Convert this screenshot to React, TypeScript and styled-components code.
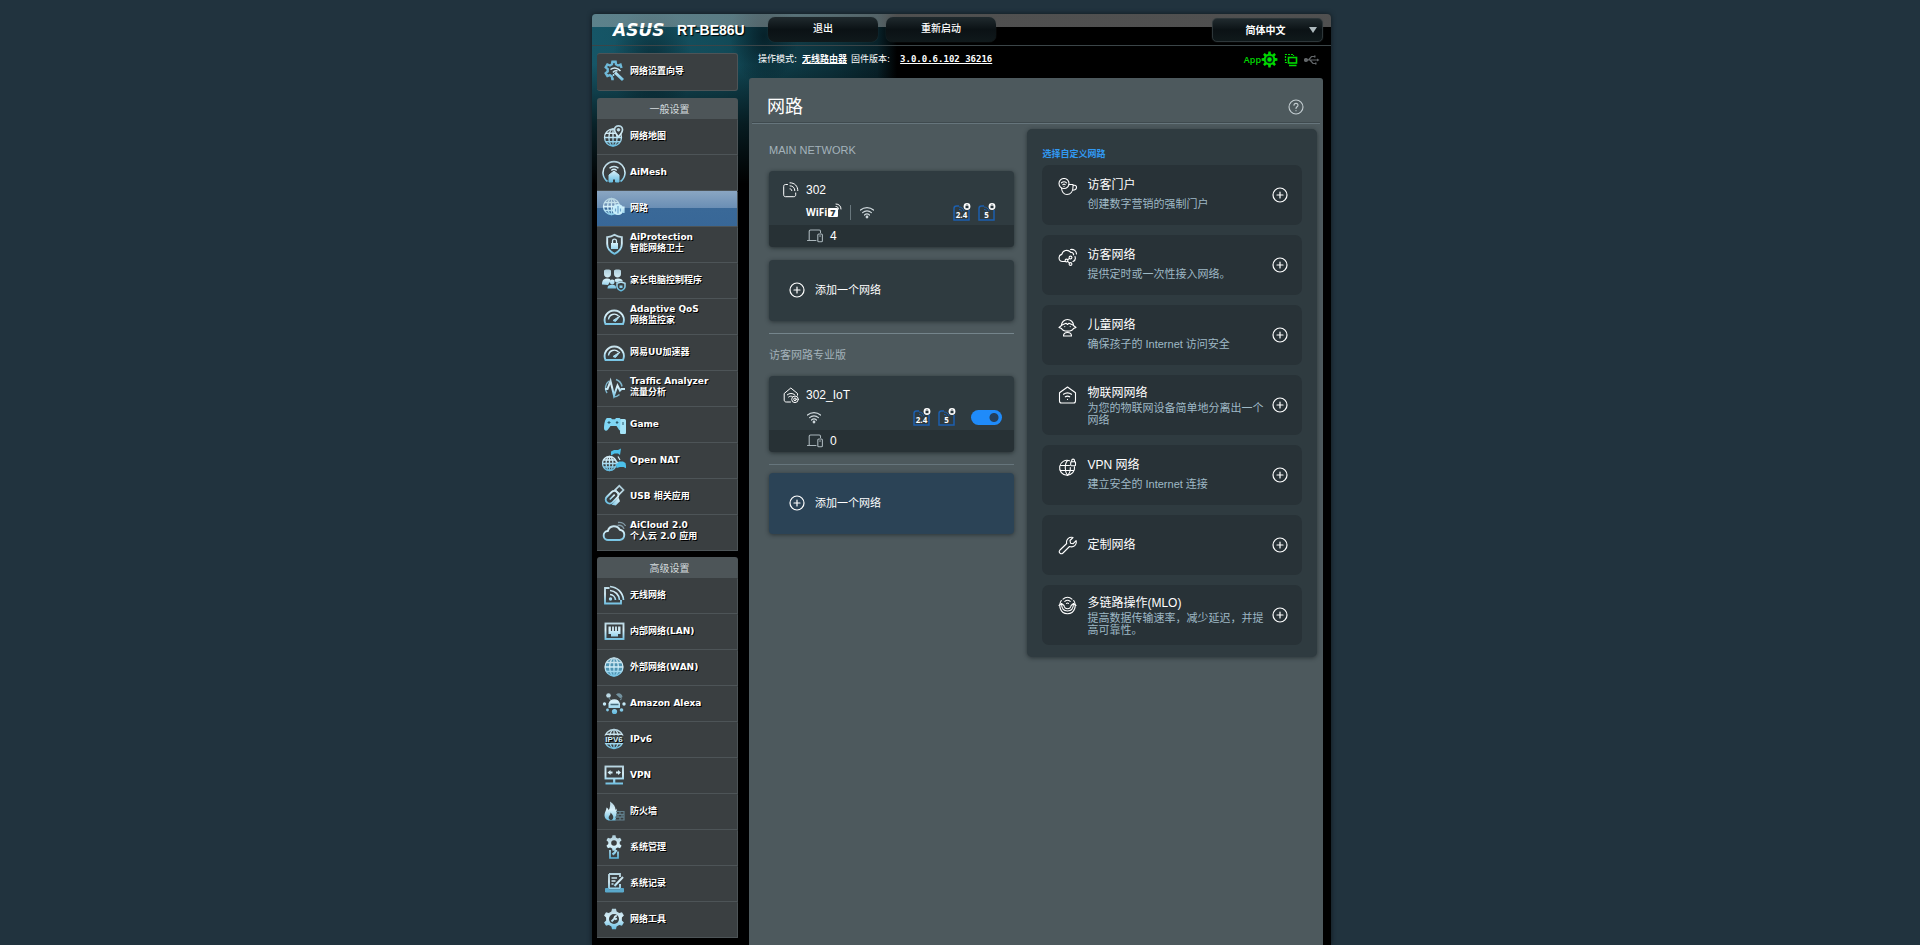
import React from "react";
import styled, { createGlobalStyle, css } from "styled-components";

const ui = `"DejaVu Sans", "Noto Sans CJK SC", sans-serif`;
const sans = `"Liberation Sans", "Noto Sans CJK SC", sans-serif`;

const GlobalStyle = createGlobalStyle`
  * { box-sizing: border-box; }
  body { margin: 0; background: #21333e; font-family: ${sans}; color: #fff; }
  button, select, input { font: inherit; color: inherit; margin: 0; }
  h1, h2, h3, p, ul { margin: 0; padding: 0; font-weight: 400; }
  ul { list-style: none; }
  svg { display: block; flex: none; }
`;

/* ---------- frame ---------- */

const Page = styled.div`
  display: flex;
  flex-direction: column;
  min-height: 100vh;
  padding: 14px 0 0 3px;
`;

const Frame = styled.div`
  flex: 1;
  width: 100%;
  max-width: 739px;
  margin: 0 auto;
  border-radius: 4px 4px 0 0;
  box-shadow: 0 0 5px #10181d;
  background:
    radial-gradient(ellipse 40px 60px at 60px 50px, rgba(0, 12, 18, 0.5), transparent),
    radial-gradient(ellipse 34px 50px at 172px 22px, rgba(0, 12, 18, 0.6), transparent),
    linear-gradient(180deg, transparent 50px, rgba(0, 0, 0, 0.6) 110px, #000 170px),
    linear-gradient(90deg, #165667 0, #124b59 130px, #0c313b 240px, #08222a 285px, #000 305px);
`;

const TopBar = styled.header`
  display: flex;
  align-items: center;
  height: 32px;
  padding: 0 8px 0 20px;
  border-bottom: 1px solid #3b4548;
  border-radius: 4px 4px 0 0;
  background: linear-gradient(180deg, rgba(190, 190, 190, 0.42) 0 13px, transparent 13px);
`;

const Model = styled.div`
  flex: 0 0 100px;
  padding-left: 9px;
  font-size: 14px;
  font-weight: 700;
  line-height: 16px;
  white-space: nowrap;
  text-shadow: 1px 1px 1px #000;
`;

const keyStyle = css`
  border: 0;
  border-radius: 7px;
  background: linear-gradient(180deg, #202a2e 0, #0b1215 50%, #10191b 100%);
  box-shadow: 0 0 1px #3c484c;
  font: 10px/24px ${sans};
  font-weight: 700;
  text-align: center;
  cursor: pointer;
`;

const TopButton = styled.button`
  ${keyStyle}
  flex: 0 0 110px;
  height: 25px;
  padding: 0 0 2px;
  margin-right: 8px;
  font-weight: 500;
`;

const Language = styled.div`
  position: relative;
  margin-left: auto;
  select {
    ${keyStyle}
    appearance: none;
    width: 111px;
    height: 24px;
    padding: 0 4px 0 0;
    text-align-last: center;
    border: 1px solid #2d3639;
    border-radius: 5px;
  }
  &::after {
    content: "";
    position: absolute;
    right: 6px;
    top: 9px;
    border: 4px solid transparent;
    border-top: 6px solid #aeb9bd;
    border-bottom: 0;
    pointer-events: none;
  }
`;

const Body = styled.div`
  display: grid;
  grid-template-columns: 141px minmax(0, 1fr);
  column-gap: 11px;
  padding: 0 8px 0 5px;
  min-height: calc(100vh - 46px);
`;

/* ---------- side menu ---------- */

const Side = styled.nav`
  display: flex;
  flex-direction: column;
  gap: 6px;
  padding-top: 7px;
`;

const Group = styled.section`
  border-radius: 3px 3px 0 0;
  overflow: hidden;
`;

const GroupTitle = styled.h2`
  height: 21px;
  padding: 3px 0 0 4px;
  background: #4d5558;
  color: #d3dadd;
  font: 10px/18px ${ui};
  text-align: center;
`;

const Item = styled.a<{ $active?: boolean; $alone?: boolean }>`
  display: flex;
  align-items: center;
  gap: 4px;
  height: ${(p) => (p.$alone ? 38 : 36)}px;
  padding: 0 0 3px 5px;
  border: 1px solid #4d5457;
  border-top-color: ${(p) => (p.$alone ? "#4d5457" : "transparent")};
  border-width: 1px 1px 1px 0;
  border-radius: ${(p) => (p.$alone ? 3 : 0)}px;
  margin-bottom: ${(p) => (p.$alone ? 1 : 0)}px;
  background: ${(p) =>
    p.$active
      ? "linear-gradient(180deg, #8aa6c2 0, #6b8fb5 46%, #3a6998 48%, #386797 100%) border-box"
      : "#3a3f41"};
  color: #fff;
  font: 700 9px/11px ${ui};
  text-decoration: none;
  text-shadow: 1px 1px 0 #000;
  white-space: nowrap;
`;

const ItemText = styled.span<{ $double?: boolean }>`
  padding: ${(p) => (p.$double ? "0 0 2px" : "2px 0 0")};
  small {
    display: block;
    font-size: 9px;
    font-weight: 600;
  }
`;

/* ---------- content ---------- */

const Status = styled.div`
  display: flex;
  align-items: center;
  height: 32px;
  padding: 0 3px 6px 9px;
  font: 9px/12px ${ui};
  a {
    color: #fff;
    font-weight: 700;
    margin: 0 4px 0 5px;
  }
`;

const Version = styled.a`
  && {
    margin-left: 10px;
    font-family: "DejaVu Sans Mono", monospace;
  }
`;

const Tray = styled.div`
  display: flex;
  align-items: center;
  gap: 6px;
  margin-left: auto;
  padding-top: 1px;
  color: #00d800;
  font-family: "Open Sans", sans-serif;
  font-weight: 600;
`;

const AppBadge = styled.span`
  display: flex;
  align-items: center;
`;

const Panel = styled.div`
  min-height: calc(100vh - 78px);
  border-radius: 3px 3px 0 0;
  background: #4d595d;
`;

const PanelHead = styled.div`
  display: flex;
  align-items: center;
  justify-content: space-between;
  height: 46px;
  margin: 0 3px;
  padding: 12px 16px 0 15px;
  border-bottom: 1px solid #66757c;
  box-shadow: inset 0 -1px 0 #3f4a4e;
  h1 {
    font: 18px/24px ${sans};
  }
`;

const IconButton = styled.button`
  display: block;
  padding: 0;
  border: 0;
  background: none;
  color: inherit;
  cursor: pointer;
`;

const Columns = styled.div`
  display: grid;
  grid-template-columns: minmax(0, 245fr) minmax(0, 289fr);
  column-gap: 13px;
  align-items: start;
  padding: 0 6px 0 20px;
`;

const Networks = styled.section`
  padding-top: 20px;
`;

const Caption = styled.h2`
  margin-bottom: 15px;
  color: #a4b3bb;
  font: 11px/12px ${sans};
`;

const NetCard = styled.article`
  border-radius: 4px;
  overflow: hidden;
  background: #2f3b40;
  box-shadow: 0 1px 4px rgba(20, 28, 32, 0.7);
`;

const NetName = styled.h3`
  display: flex;
  align-items: center;
  gap: 7px;
  padding: 11px 14px 0;
  font: 12px/16px ${sans};
`;

const NetInfo = styled.div<{ $end: number }>`
  display: flex;
  align-items: center;
  gap: 8px;
  height: 27px;
  padding: 1px ${(p) => p.$end}px 0 37px;
`;

const Wifi7 = styled.span`
  display: flex;
  align-items: center;
  font: 700 10px/12px "Open Sans", sans-serif;
  b {
    margin-left: 1px;
    padding: 0 2px;
    border-radius: 1px;
    background: #fff;
    color: #2f3b40;
    font-size: 9px;
    line-height: 9px;
  }
  svg {
    margin: -11px 0 0 -3px;
  }
`;

const Separator = styled.i`
  width: 1px;
  height: 15px;
  background: #69777d;
`;

const Bands = styled.div`
  display: flex;
  gap: 7px;
  margin-left: auto;
`;

const Switch = styled.input`
  appearance: none;
  width: 31px;
  height: 15px;
  margin: 0 0 0 7px;
  border-radius: 8px;
  cursor: pointer;
  background: radial-gradient(circle at 8px 50%, #2b3a42 0 5px, #6d7a80 6px);
  &:checked {
    background: radial-gradient(circle at 23px 50%, #24405c 0 4px, #1f8bfa 5px);
  }
`;

const Clients = styled.div`
  display: flex;
  align-items: center;
  gap: 7px;
  height: 22px;
  padding-left: 38px;
  background: #273135;
  font: 12px/16px ${sans};
`;

const AddCard = styled.button<{ $blue?: boolean }>`
  display: flex;
  align-items: center;
  gap: 10px;
  width: 100%;
  height: 61px;
  margin-top: ${(p) => (p.$blue ? 8 : 13)}px;
  padding: 0 20px 2px;
  border: 0;
  border-radius: 4px;
  background: ${(p) => (p.$blue ? "#2b4356" : "#2f3b40")};
  box-shadow: 0 1px 4px rgba(20, 28, 32, 0.6);
  color: #fff;
  font: 11px/16px ${sans};
  text-align: left;
  cursor: pointer;
`;

const Rule = styled.hr<{ $wide?: boolean }>`
  height: 1px;
  margin: 12px 0 ${(p) => (p.$wide ? 15 : 0)}px;
  border: 0;
  background: ${(p) => (p.$wide ? "#75858c" : "#66757c")};
`;

const Choices = styled.section`
  margin-top: 5px;
  padding: 19px 15px 12px 15px;
  border-radius: 5px;
  background: #2f3b40;
  box-shadow: 0 1px 4px rgba(20, 28, 32, 0.6);
`;

const ChoicesTitle = styled.h2`
  margin-bottom: 5px;
  color: #3199f2;
  font: 700 9px/12px ${sans};
`;

const ChoiceList = styled.ul`
  display: grid;
  row-gap: 10px;
`;

const Choice = styled.li`
  display: flex;
  align-items: center;
  min-height: 60px;
  padding: 0 14px 0 16px;
  border-radius: 7px;
  background: #283237;
`;

const ChoiceMain = styled.div`
  flex: 1;
  display: grid;
  grid-template-columns: 20px minmax(0, 1fr);
  column-gap: 9px;
  svg {
    margin-top: 1px;
  }
  h3 {
    font: 12px/16px ${sans};
  }
  h3:only-child {
    line-height: 20px;
  }
  p {
    display: flex;
    align-items: center;
    min-height: 20px;
    margin-top: 1px;
    color: #9fb9c6;
    font: 11px/12px ${sans};
  }
`;

/* ---------- drawings ---------- */

function gear(cx: number, cy: number, outer: number, inner: number, teeth: number) {
  const pts: string[] = [];
  const step = (Math.PI * 2) / teeth;
  for (let i = 0; i < teeth; i++) {
    const a = i * step - Math.PI / 2;
    [
      [-0.32, inner],
      [-0.18, outer],
      [0.18, outer],
      [0.32, inner],
    ].forEach(([k, r]) => {
      const t = a + k * step;
      pts.push(`${(cx + r * Math.cos(t)).toFixed(2)} ${(cy + r * Math.sin(t)).toFixed(2)}`);
    });
  }
  return `M${pts.join("L")}Z`;
}

const F = "url(#ice)";

const Globe = ({ x = 12, y = 12, r = 9 }: { x?: number; y?: number; r?: number }) => (
  <g strokeWidth="1.3">
    <circle cx={x} cy={y} r={r} />
    <ellipse cx={x} cy={y} rx={r * 0.48} ry={r} />
    <path d={`M${x - r} ${y}H${x + r}M${x} ${y - r}V${y + r}M${x - r * 0.85} ${y - r * 0.5}H${x + r * 0.85}M${x - r * 0.85} ${y + r * 0.5}H${x + r * 0.85}`} />
  </g>
);

const Gauge = () => (
  <g>
    <path d="M3.500 20a9.600 9.600 0 1 1 17.500 0Z" strokeWidth="1.9" />
    <path d="M6.500 15.500a5.800 5.800 0 0 1 10-3.500" strokeWidth="1.400" />
    <path d="M11 16.500l7-4.500-4.500 5.500z" fill={F} strokeWidth="1" />
  </g>
);

const menuArt: Record<string, React.ReactNode> = {
  wizard: (
    <g>
      <path d="M19.500 9l-1-3.500-2.500 1-2-1.200-.4-2.600h-3.200l-.5 2.600-2 1.200-2.500-1-1.700 2.800 2 1.800v2.400l-2 1.700 1.700 2.800 2.400-.9 2 1.300.5 2.600h1.500" strokeWidth="2.400" stroke="#6fb9d8" />
      <path d="M13 13.500l8 7.500" strokeWidth="3" />
      <path d="M8.500 10.500c3.500-2.500 7.500-1.500 10 1.500M11 13.500c1-1.500 3-2 4.500-1.500M11.500 15v2" strokeWidth="1.500" />
    </g>
  ),
  map: (
    <g>
      <Globe x={11} y={13.500} r={8.500} />
      <path d="M16.500 13c-2.600-3.200-4-5-4-7.200a4 4 0 0 1 8 0c0 2.200-1.400 4-4 7.200z" fill="#3a3f41" strokeWidth="1.700" />
      <circle cx="16.500" cy="5.800" r="1.300" fill={F} />
    </g>
  ),
  mesh: (
    <g>
      <path d="M5.500 21.500a11 11 0 1 1 13 0" strokeWidth="1.600" />
      <path d="M7.500 8.300a6.500 6.500 0 0 1 9 0M9.300 10.500a4 4 0 0 1 5.400 0" strokeWidth="1.400" />
      <path d="M7 15l5-4 5 4v7h-3.500v-3h-3v3H7z" fill={F} strokeWidth="1" />
    </g>
  ),
  network: (
    <g>
      <Globe x={9.500} y={10.500} r={8} />
      <circle cx="16" cy="13.500" r="5.500" fill="#c8eefb" stroke="none" />
      <path d="M13.500 12.500v3M18.500 12.500v3M16 10v7.500" stroke="#6fa6cd" strokeWidth="1.200" />
      <path d="M21.500 10.500v6.500" strokeWidth="2.200" />
    </g>
  ),
  shield: (
    <g>
      <path d="M12.500 2.800c2.500 1.700 4.800 2.200 7.300 2.300v7c0 5-3 7.800-7.300 9.700-4.300-1.900-7.300-4.700-7.300-9.700v-7c2.500-.1 4.800-.6 7.300-2.300z" strokeWidth="1.900" />
      <rect x="9" y="11" width="7" height="6" fill={F} stroke="none" />
      <path d="M10.500 11V9.200a2 2 0 0 1 4 0V11" strokeWidth="1.300" />
    </g>
  ),
  family: (
    <g fill={F} stroke="none">
      <path d="M2 3c0-1 1-1.500 3.500-1.500S9 2 9 3v3c0 2-1.500 3.500-3.500 3.500S2 8 2 6zM12 3c0-1 1-1.500 3.500-1.500S19 2 19 3v3c0 2-1.500 3.500-3.500 3.500S12 8 12 6z" />
      <path d="M0 16.500c0-4.500 2-6 5.500-6 2.500 0 3 1 3 2.500L6 17zM12.500 13c0-1.700 1-2.500 3.500-2.500 3 0 4.500 1 5 3l-2-.5-4.500 1.500z" />
      <circle cx="10.200" cy="14" r="2.400" />
      <path d="M5.500 20.500c0-3 2-3.700 4.700-3.700s3.800.7 3.800 3.700z" />
      <path d="M19 14l4 1.400v3c0 2-1.500 3.300-4 4.400-2.500-1.100-4-2.400-4-4.400v-3z" fill="#3a3f41" stroke={F} strokeWidth="1.500" />
      <rect x="17.500" y="17.500" width="3" height="2.500" />
    </g>
  ),
  gauge: <Gauge />,
  traffic: (
    <g>
      <path d="M5 17a8.800 8.800 0 0 1 2-12M14 3.500a9 9 0 0 1 6 7M17.500 18.500a9 9 0 0 1-6 2.500" strokeWidth="1.500" stroke="#7fb5cb" />
      <path d="M3 13h2.500l3-8 3.500 14.500 3.500-10 2.500 5 1.500-1.500h3.500" strokeWidth="2" />
    </g>
  ),
  game: (
    <g fill="#7fd6f5" stroke="none">
      <path d="M5 6h4l1 1.200h3L14 6h3.500c2 1 3 6 3 10-.3 3-2.700 3.300-4 1l-2-3h-6l-2.500 3.500c-1.500 2-4 1.500-4-1.500 0-4 1-9 3-10z" />
      <path d="M18.500 7h4c1 0 1.500.8 1.500 2v11.500c0 1-.5 1.500-1.500 1.500h-3c-1 0-1.500-.5-1.500-1.500z" fill="#a5e4f8" />
      <path d="M5.500 10.500h3M7 9v3M15 9v3M13.800 10.500h2.600M21 10v3" stroke="#2b5a6d" strokeWidth="1" />
    </g>
  ),
  nat: (
    <g>
      <Globe x={7.500} y={15.500} r={7} />
      <path d="M9 3.500l3-1.500h4l3-1.500-1 6.500-2-1.500h-3.500l-3.500 2zM14 16l3-2.500h4l2.500 1.500 1 5.500-3-1.500h-3.500l-3.500 1z" fill="#4cc0ea" stroke="none" />
      <path d="M16 8.500l2 3.500M13 12l3 3" strokeWidth="1.200" />
    </g>
  ),
  usb: (
    <g transform="rotate(45 12 12)">
      <rect x="7.500" y="7" width="8" height="14.500" rx="4" strokeWidth="2" />
      <rect x="8.500" y="1" width="6" height="6" strokeWidth="1.700" />
      <path d="M11.500 10.500v7" strokeWidth="1.600" />
      <path d="M16.500 10l3.500 1.500v6L16.500 20z" fill={F} stroke="none" />
    </g>
  ),
  cloud: (
    <g>
      <path d="M6.500 20a4.500 4.500 0 0 1-.7-9 6.500 6.500 0 0 1 12-1.300A5.200 5.200 0 0 1 17.800 20z" strokeWidth="1.900" />
      <path d="M15.500 5.500c3-.8 5.500 1 6.500 3.500M16 2.500c3.500-.5 6 .8 7.500 3.500" strokeWidth="1.300" stroke="#8199a5" />
    </g>
  ),
  wireless: (
    <g>
      <path d="M7.500 5H3v15.500h16V17" strokeWidth="1.800" />
      <path d="M8 3.500A14.500 14.500 0 0 1 21.500 17M8 7.500a10 10 0 0 1 9.500 9.500M8 11.500a6 6 0 0 1 5.500 5.500" strokeWidth="1.700" />
      <circle cx="8.500" cy="16" r="1.700" fill={F} stroke="none" />
    </g>
  ),
  lan: (
    <g>
      <rect x="3.500" y="4.500" width="18" height="15.500" strokeWidth="1.900" />
      <path d="M6.500 7.500h12v7.500H16v2.500H9V15H6.500z" fill={F} stroke="none" />
      <path d="M9.500 7v5M12.500 7v5M15.500 7v5" stroke="#3a3f41" strokeWidth="1.200" />
    </g>
  ),
  wan: (
    <g>
      <circle cx="12" cy="12" r="9" fill="#4e93b1" stroke="none" />
      <Globe />
    </g>
  ),
  alexa: (
    <g fill={F} stroke="none">
      <path d="M6.500 17v-4.500a6 6 0 0 1 11.500 0V17z" />
      <circle cx="2.500" cy="13" r="1.700" />
      <circle cx="22" cy="13" r="1.700" />
      <circle cx="6.500" cy="4.500" r="2.300" />
      <circle cx="12.500" cy="20.500" r="2.600" />
      <circle cx="5.500" cy="19" r="1.400" />
      <circle cx="19.500" cy="19" r="1.800" />
      <path d="M14 3.500c2-2 6-1.500 6.500 2.500l-2 1.500z" fill="#73929f" />
      <path d="M8.500 13.500h8" stroke="#456b7c" strokeWidth="1.600" />
      <path d="M6 6l2.500 3M18 9l2-1.500" stroke="#73929f" strokeWidth="1" />
    </g>
  ),
  ipv6: (
    <g>
      <Globe r={9.500} />
      <rect x="2" y="8.500" width="20" height="7.500" fill="#3a3f41" stroke="none" />
      <text x="12" y="15.300" textAnchor="middle" fontSize="8" fontWeight="700" fontFamily="Liberation Sans" fill="#d4f1fa" stroke="none">IPV6</text>
    </g>
  ),
  vpn: (
    <g>
      <rect x="3.500" y="3.500" width="17.500" height="12" strokeWidth="1.900" />
      <path d="M12.200 16v3.500M3.500 20.500h17.500" strokeWidth="2.200" />
      <path d="M5.500 9.500l3-2.600v1.700h2v1.800h-2v1.700zM19 9.500l-3-2.600v1.700h-2v1.800h2v1.700z" fill={F} stroke="none" />
    </g>
  ),
  fire: (
    <g>
      <path d="M8 21.500c-4 0-5.500-2.700-5.500-5.500 0-3 2-4.500 2-7.500 1.300.5 2 1.800 2.200 2.800C8 9 8.500 6 8 2.500c4 2.500 5.500 5.500 5.500 8.500l1-1.500c1 4-.5 8.500-1 12z" fill={F} stroke="none" />
      <path d="M8.500 21c-2-.5-2.500-3-1-4.500 1-1 1-2 1-3 2 2 3.500 4 2.500 6-.5 1-1.300 1.500-2.500 1.500z" fill="#3a3f41" stroke="none" />
      <path d="M14 12.500h8v8.500h-9M14 15.300h8M13 18.200h9M18 12.500v2.800M16 15.300v3M20 15.300v3M18 18.200v3" stroke="#62808d" strokeWidth="1.200" />
    </g>
  ),
  admin: (
    <g>
      <path d={gear(12, 8, 8, 5.800, 6)} fill={F} stroke="none" />
      <circle cx="12" cy="8" r="2.800" fill="#3a3f41" stroke="none" />
      <path d="M8 15v8h8v-6.500" strokeWidth="1.700" />
      <path d="M10.500 19.500l2-1.500 2-3" strokeWidth="2.200" />
    </g>
  ),
  log: (
    <g>
      <path d="M7 3h11v3M7 3v14.500h11V13" strokeWidth="1.800" />
      <path d="M9.500 7h5.500M9.500 10h4M9.500 13h2" strokeWidth="1.400" />
      <path d="M12.500 15l8.500-9" strokeWidth="2" />
      <path d="M3.500 17.500v3.500h18v-3.500h-3v1.500h-12v-1.500z" fill="#5aa9cb" stroke="#5aa9cb" strokeWidth="1" />
    </g>
  ),
  tools: (
    <g>
      <path d={gear(12, 12, 10.500, 8, 6)} fill={F} stroke="none" />
      <circle cx="12" cy="12" r="5" fill="#3a3f41" stroke="none" />
      <path d="M9.500 14.500l3-3c-.3-1.500.8-2.700 2.300-2.500M15 11.500l-2 1" strokeWidth="1.900" />
    </g>
  ),
};

const MenuIcon = ({ name }: { name: string }) => (
  <svg width="24" height="24" viewBox="0 0 24 24" fill="none" stroke={F} aria-hidden="true">
    {menuArt[name]}
  </svg>
);

const line = { fill: "none", stroke: "currentColor", strokeLinecap: "round", strokeLinejoin: "round" } as const;

const PlusCircle = () => (
  <svg width="16" height="16" viewBox="0 0 16 16" {...line} strokeWidth="1.200">
    <circle cx="8" cy="8" r="7" />
    <path d="M8 5v6M5 8h6" />
  </svg>
);

const WifiSign = () => (
  <svg width="16" height="14" viewBox="0 0 16 14" {...line} stroke="#cfd8dc" strokeWidth="1.200">
    <path d="M1.500 5a9.800 9.800 0 0 1 13 0M3.600 7.600a6.600 6.600 0 0 1 8.800 0M5.500 10a3.800 3.800 0 0 1 5 0" />
    <circle cx="8" cy="12" r=".8" fill="#cfd8dc" />
  </svg>
);

const Devices = () => (
  <svg width="16" height="14" viewBox="0 0 16 14" {...line} stroke="#aab6bb" strokeWidth="1.100">
    <path d="M13.500 3.500V2.300c0-.8-.3-1.300-1.200-1.300H3.500c-.9 0-1.300.5-1.300 1.300V11M.5 11.500h8.500" />
    <rect x="10.800" y="5" width="4.600" height="7.800" rx="1" />
    <path d="M12.600 7h1" />
  </svg>
);

const Band = ({ label }: { label: string }) => (
  <svg width="18" height="18" viewBox="0 0 18 18" fill="none">
    <path d="M6 3H3.500C2 3 1 4 1 5.500V17h15V7" stroke="#1c5fae" strokeWidth="1.500" />
    <path d="M6 4c2 0 4.500 1.500 5 4M6 6.500c1.500 0 2.500.8 3 2" stroke="#1c5fae" strokeWidth="1" />
    <circle cx="14" cy="3.500" r="3.400" fill="#fff" />
    <rect x="12.500" y="3" width="3" height="2.200" fill="#26343b" />
    <path d="M13.200 3v-.6a.8.8 0 0 1 1.600 0V3" stroke="#26343b" strokeWidth=".6" />
    <text x="8.500" y="14.500" textAnchor="middle" fill="#fff" fontFamily="Open Sans" fontWeight="700" fontSize="8">{label}</text>
  </svg>
);

const IotHouse = () => (
  <svg width="16" height="16" viewBox="0 0 16 16" {...line}>
    <path d="M7.500 15H3.300C2 15 1.200 14.200 1.200 13V6.500L7.800 1l6.700 5.500v1.700" />
    <path d="M4.300 7.800c2.300-1.800 5-1.800 7.200-.2M5.600 10c1.200-.9 2.300-1 3.400-.6" />
    <circle cx="12" cy="12.300" r="3.300" />
    <circle cx="12" cy="12.300" r="1.300" />
  </svg>
);

const choiceArt: Record<string, React.ReactNode> = {
  portal: (
    <g>
      <circle cx="6" cy="5.500" r="5" />
      <path d="M3.500 4.800c1.600-1.300 3.500-1.300 5 0M4.800 6.600c.8-.6 1.600-.6 2.400 0M6 8.300v.1" />
      <path d="M3.500 10.200C4 14 6 16.500 9 16.500c3.500 0 6-3 6-7.500V6.500h-4M15 7.500c2-.7 3.500 0 3.500 1.700 0 1.800-1.700 2.900-4 2.900" />
    </g>
  ),
  guest: (
    <g>
      <path d="M7 13.500H4.500a3.600 3.600 0 0 1-.7-7.100 5 5 0 0 1 8.700-2.200M17 8.500c.8 2.300-.2 4.300-2 5" />
      <path d="M12.500 1.500c3.500-.5 5.800 1.500 6 4.500M12.500 4.300c1.900-.1 3 .9 3.200 2.600" />
      <circle cx="12.500" cy="9.500" r="1.400" />
      <circle cx="8.500" cy="12.500" r="1.400" />
      <circle cx="12.500" cy="16" r="1.400" />
      <path d="M11.400 10.500l-1.800 1.200M9.600 13.400l1.800 1.500" />
    </g>
  ),
  kids: (
    <g>
      <path d="M3.500 7.500a6 6 0 0 1 12 0l2.500 2-2.500 1c-.7 1.600-2.800 2.600-6 2.600s-5.300-1-6-2.600l-2.500-1z" />
      <path d="M3.500 7.200l4.500-2 1.500 1.300 1.500-1.300 4.500 2M6.800 8.500v.1M12.200 8.500v.1M5.500 18c0-2.500 1.300-3.500 4-3.500s4 1 4 3.500z" />
    </g>
  ),
  iot: (
    <g>
      <path d="M1.500 6.800L9.500 1l8 5.800V15c0 1.200-.8 2-2 2h-12c-1.200 0-2-.8-2-2z" />
      <path d="M5.500 8.300c2.600-1.900 5.400-1.900 8 0M7.300 10.800c1.500-1 2.900-1 4.400 0M9.500 13.300v.2" />
    </g>
  ),
  vpn: (
    <g>
      <path d="M11.500 2.700a7.500 7.500 0 1 0 5 6M2 7.500h9.500M2.300 12.500h13.200" />
      <path d="M9.500 2.500c-3 3-3 11.500 0 15M9.500 17.500c2-1.800 3-5 2.800-8" />
      <rect x="12.700" y="3.800" width="4.800" height="4" rx=".7" />
      <path d="M13.700 3.800V2.500a1.400 1.400 0 0 1 2.800 0v1.300" />
    </g>
  ),
  wrench: (
    <path d="M11.500 10.500L5 17c-2.200 2-5-.7-3-3l6.700-6.500C7.700 3.500 11.200.5 15 1.500L12 4.500l.5 2.700 2.700.5 2.900-3c1 4-2.300 7.200-6.600 5.800z" />
  ),
  mlo: (
    <g>
      <path d="M5 3.200c2.700-2.700 6.300-2.700 9 0M6.800 5.400c1.700-1.500 3.700-1.500 5.400 0M8.500 7.400c.7-.5 1.300-.5 2 0" />
      <path d="M1 9.500l2.500-2 2.500 2c.3 2.200 1.500 3.200 3.500 3.200s3.300-1 3.600-3.200l2.400-2 2.500 2" />
      <path d="M3.500 8c.2 4.500 2.300 7 6 7s5.800-2.500 6-7" />
      <path d="M3.300 4.500C.3 9 1.800 17.600 9.500 17.800c7.700-.2 9.200-8.800 6.200-13.300" />
    </g>
  ),
};

/* ---------- data ---------- */

type Entry = [icon: string, text: string, sub?: string];

const general: Entry[] = [
  ["map", "网络地图"],
  ["mesh", "AiMesh"],
  ["network", "网路"],
  ["shield", "AiProtection", "智能网络卫士"],
  ["family", "家长电脑控制程序"],
  ["gauge", "Adaptive QoS", "网络监控家"],
  ["gauge", "网易UU加速器"],
  ["traffic", "Traffic Analyzer", "流量分析"],
  ["game", "Game"],
  ["nat", "Open NAT"],
  ["usb", "USB 相关应用"],
  ["cloud", "AiCloud 2.0", "个人云 2.0 应用"],
];

const advanced: Entry[] = [
  ["wireless", "无线网络"],
  ["lan", "内部网络(LAN)"],
  ["wan", "外部网络(WAN)"],
  ["alexa", "Amazon Alexa"],
  ["ipv6", "IPv6"],
  ["vpn", "VPN"],
  ["fire", "防火墙"],
  ["admin", "系统管理"],
  ["log", "系统记录"],
  ["tools", "网络工具"],
];

const choices: Entry[] = [
  ["portal", "访客门户", "创建数字营销的强制门户"],
  ["guest", "访客网络", "提供定时或一次性接入网络。"],
  ["kids", "儿童网络", "确保孩子的 Internet 访问安全"],
  ["iot", "物联网网络", "为您的物联网设备简单地分离出一个网络"],
  ["vpn", "VPN 网络", "建立安全的 Internet 连接"],
  ["wrench", "定制网络"],
  ["mlo", "多链路操作(MLO)", "提高数据传输速率，减少延迟，并提高可靠性。"],
];

const MenuGroup = ({ title, items }: { title: string; items: Entry[] }) => (
  <Group>
    <GroupTitle>{title}</GroupTitle>
    <ul>
      {items.map(([icon, text, sub]) => (
        <li key={text}>
          <Item href="#" $active={icon === "network"}>
            <MenuIcon name={icon} />
            <ItemText $double={!!sub}>
              {text}
              {sub && <small>{sub}</small>}
            </ItemText>
          </Item>
        </li>
      ))}
    </ul>
  </Group>
);

export default function App() {
  return (
    <Page>
      <GlobalStyle />
      <Frame>
        <TopBar>
          <svg width="56" height="20" viewBox="0 0 56 20" role="img" aria-label="ASUS">
            <defs>
              <linearGradient id="ice" gradientUnits="userSpaceOnUse" x1="0" y1="0" x2="0" y2="24">
                <stop offset="0" stopColor="#a9c9d6" />
                <stop offset=".45" stopColor="#d8f1fa" />
                <stop offset="1" stopColor="#55b4dc" />
              </linearGradient>
            </defs>
            <text x="1" y="16" fontFamily="DejaVu Sans" fontStyle="italic" fontWeight="700" fontSize="17" fill="#fff">ASUS</text>
            <path d="M15 8.500h39" stroke="#1d4852" strokeWidth=".7" />
          </svg>
          <Model>RT-BE86U</Model>
          <TopButton>退出</TopButton>
          <TopButton>重新启动</TopButton>
          <Language>
            <select aria-label="语言" defaultValue="cn">
              <option value="cn">简体中文</option>
            </select>
          </Language>
        </TopBar>

        <Body>
          <Side>
            <Item href="#" $alone>
              <MenuIcon name="wizard" />
              <ItemText>网络设置向导</ItemText>
            </Item>
            <MenuGroup title="一般设置" items={general} />
            <MenuGroup title="高级设置" items={advanced} />
          </Side>

          <main>
            <Status>
              操作模式: <a href="#">无线路由器</a> 固件版本: <Version href="#">3.0.0.6.102_36216</Version>
              <Tray>
                <AppBadge>
                  App
                  <svg width="17" height="17" viewBox="0 0 17 17">
                    <path d={gear(8.5, 8.5, 8, 5.8, 8)} fill="#00d800" />
                    <circle cx="8.500" cy="8.500" r="3.800" fill="#021" />
                    <circle cx="8.500" cy="8.500" r="2.200" fill="#00e800" />
                  </svg>
                </AppBadge>
                <svg width="14" height="14" viewBox="0 0 14 14" fill="none" stroke="#00d800">
                  <path d="M3 9.500H1.500v-8h8V3" strokeWidth="1.200" strokeDasharray="2 1" />
                  <rect x="4.500" y="4.500" width="8" height="5.500" strokeWidth="1.600" />
                  <path d="M5 12.500h7.500" strokeWidth="1.500" />
                </svg>
                <svg width="16" height="12" viewBox="0 0 16 12" fill="none" stroke="#63676a" strokeWidth="1.200">
                  <path d="M2 6h12M4.500 6l3-3.500H10M6 6l3 3.500h2" />
                  <circle cx="2" cy="6" r="1.500" fill="#63676a" />
                  <path d="M13 4.500L15.500 6 13 7.500zM10 1.500h1.500v2H10zM11 8.500h1.500v2H11z" fill="#63676a" stroke="none" />
                </svg>
              </Tray>
            </Status>

            <Panel>
              <PanelHead>
                <h1>网路</h1>
                <IconButton aria-label="帮助">
                  <svg width="16" height="16" viewBox="0 0 16 16" {...line} stroke="#c3cdd1" strokeWidth="1.100">
                    <circle cx="8" cy="8" r="7" />
                    <path d="M6 6.300c0-2.600 4-2.600 4 0C10 7.700 8 7.800 8 9.400M8 11.600v.2" />
                  </svg>
                </IconButton>
              </PanelHead>

              <Columns>
                <Networks>
                  <Caption>MAIN NETWORK</Caption>
                  <NetCard>
                    <NetName>
                      <svg width="16" height="16" viewBox="0 0 16 16" {...line}>
                        <path d="M4.500 2.500h-2C1.300 2.500.7 3.200.7 4.300v8.500c0 1.200.6 1.900 1.800 1.900h8.300c1.200 0 1.900-.7 1.900-1.900V11" />
                        <path d="M7 .8c4.800 0 7.800 3.300 7.800 7.800M7 3.800c2.800 0 4.800 2 4.800 4.800M7 6.800c1 0 1.800.8 1.800 1.800" />
                      </svg>
                      302
                    </NetName>
                    <NetInfo $end={18}>
                      <Wifi7>
                        WiFi<b>7</b>
                        <svg width="7" height="7" viewBox="0 0 7 7" {...line}>
                          <path d="M1 1c3 0 5 2 5 5M1 3.500c1.500 0 2.500 1 2.500 2.500" />
                        </svg>
                      </Wifi7>
                      <Separator />
                      <WifiSign />
                      <Bands>
                        <Band label="2.4" />
                        <Band label="5" />
                      </Bands>
                    </NetInfo>
                    <Clients>
                      <Devices /> 4
                    </Clients>
                  </NetCard>
                  <AddCard>
                    <PlusCircle /> 添加一个网络
                  </AddCard>
                  <Rule $wide />
                  <Caption>访客网路专业版</Caption>
                  <NetCard>
                    <NetName>
                      <IotHouse /> 302_IoT
                    </NetName>
                    <NetInfo $end={12}>
                      <WifiSign />
                      <Bands>
                        <Band label="2.4" />
                        <Band label="5" />
                      </Bands>
                      <Switch type="checkbox" defaultChecked aria-label="302_IoT" />
                    </NetInfo>
                    <Clients>
                      <Devices /> 0
                    </Clients>
                  </NetCard>
                  <Rule />
                  <AddCard $blue>
                    <PlusCircle /> 添加一个网络
                  </AddCard>
                </Networks>

                <Choices>
                  <ChoicesTitle>选择自定义网路</ChoicesTitle>
                  <ChoiceList>
                    {choices.map(([icon, title, text]) => (
                      <Choice key={title}>
                        <ChoiceMain>
                          <svg width="19" height="19" viewBox="0 0 19 19" {...line} strokeWidth="1.100">
                            {choiceArt[icon]}
                          </svg>
                          <div>
                            <h3>{title}</h3>
                            {text && <p>{text}</p>}
                          </div>
                        </ChoiceMain>
                        <IconButton aria-label={title}>
                          <PlusCircle />
                        </IconButton>
                      </Choice>
                    ))}
                  </ChoiceList>
                </Choices>
              </Columns>
            </Panel>
          </main>
        </Body>
      </Frame>
    </Page>
  );
}
